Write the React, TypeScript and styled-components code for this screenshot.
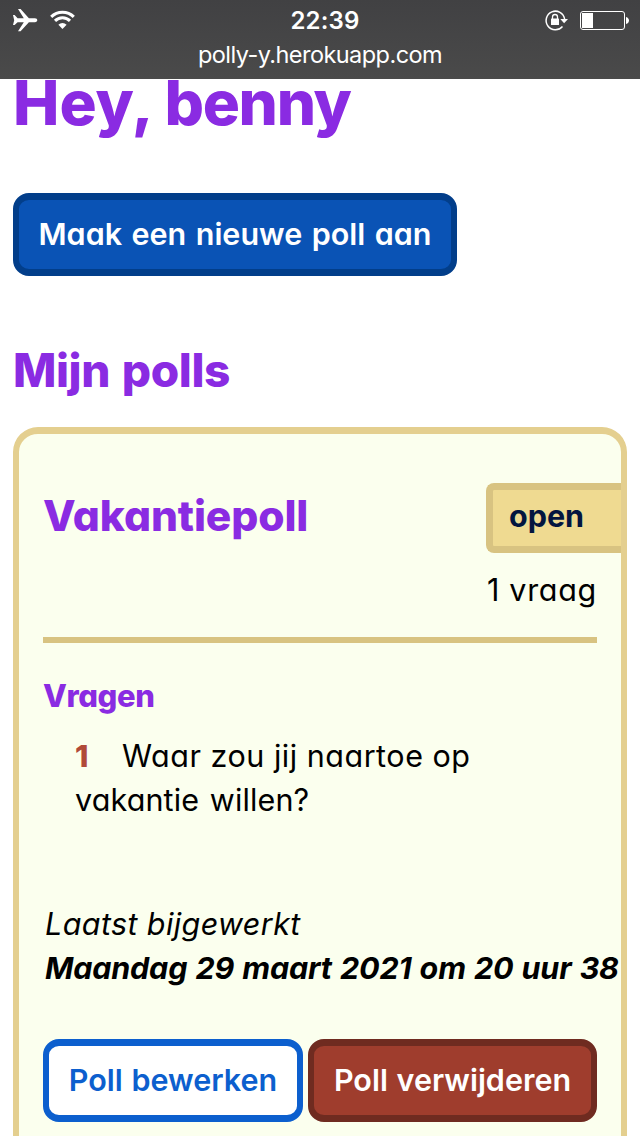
import React from "react";
import styled, { createGlobalStyle } from "styled-components";

const GlobalStyle = createGlobalStyle`
  * { box-sizing: border-box; }
  html, body { margin: 0; height: 1136px; overflow: hidden; background: #fff; }
  body { font-family: Inter, "Liberation Sans", sans-serif; font-size: 30.5px; line-height: 44px; color: #000; font-feature-settings: "cv11" 1; }
  h1, h2, h3, h4, p, ul { margin: 0; padding: 0; }
`;

const Screen = styled.div`
  width: 640px;
  height: 1136px;
  overflow: hidden;
`;

const StatusBar = styled.header`
  height: 79px;
  background: linear-gradient(#414143, #4a4a4a);
  color: #fff;
  font-feature-settings: normal;
`;

const StatusRow = styled.div`
  display: grid;
  grid-template-columns: 1fr auto 1fr;
  height: 41px;
  padding: 0 11px 0 12px;
`;

const Clock = styled.div`
  font-size: 24px;
  line-height: 41px;
  font-weight: 600;
  letter-spacing: 0.2px;
  padding-left: 9px;
`;

const StatusIcons = styled.div<{ $end?: boolean }>`
  display: flex;
  justify-content: ${(p) => (p.$end ? "flex-end" : "flex-start")};
`;

const Address = styled.div`
  text-align: center;
  font-size: 23.5px;
  line-height: 27px;
  letter-spacing: -0.55px;
`;

const Page = styled.main`
  padding: 0 13px;
`;

const Heading = styled.h1`
  color: #8a2be2;
  font-size: 62px;
  line-height: 47px;
  font-weight: 800;
  white-space: nowrap;
`;

const SectionHeading = styled.h2`
  margin: 69px 0 32px;
  color: #8a2be2;
  font-size: 46px;
  line-height: 50px;
  font-weight: 800;
  letter-spacing: -0.4px;
  word-spacing: 2px;
`;

const tones = {
  primary: { bg: "#0a53b5", border: "#023e8a", text: "#fff" },
  outline: { bg: "#fff", border: "#0c5fce", text: "#0c5fce" },
  danger: { bg: "#9f3d2d", border: "#6f2b20", text: "#fff" },
};

const Button = styled.button<{ $tone: keyof typeof tones; $width: number }>`
  display: block;
  width: ${(p) => p.$width}px;
  height: 83px;
  padding: 0 0 2px;
  border: solid ${(p) => tones[p.$tone].border};
  border-width: 7px 6px;
  border-radius: 16px;
  background: ${(p) => tones[p.$tone].bg};
  color: ${(p) => tones[p.$tone].text};
  font: 600 30.5px/44px Inter, "Liberation Sans", sans-serif;
  font-feature-settings: "cv11" 1;
  word-spacing: 1px;
  white-space: nowrap;
`;

const CreateButton = styled(Button)`
  margin-top: 67px;
  word-spacing: 1.8px;
`;

const Card = styled.article`
  height: 760px;
  padding: 49px 24px 0;
  border: solid #e4cf8f;
  border-width: 7px 6px;
  border-radius: 25px;
  background: #fbffee;
`;

const CardHeader = styled.div`
  display: flex;
  justify-content: space-between;
  height: 160px;
  border-bottom: 6px solid #d8c381;
`;

const CardTitle = styled.h3`
  margin-top: 8px;
  color: #8a2be2;
  font-size: 42.5px;
  line-height: 50px;
  font-weight: 800;
  letter-spacing: -0.12px;
`;

const CardMeta = styled.div`
  width: 111px;
  text-align: right;
  white-space: nowrap;
`;

const Badge = styled.div`
  width: 135px;
  height: 70px;
  margin-bottom: 15px;
  padding: 4px 0 0 16px;
  border: 7px solid #d8c381;
  border-right: 0;
  border-radius: 8px 0 0 8px;
  background: #efda91;
  color: #03153f;
  font-weight: 700;
  text-align: left;
`;

const Tracked = styled.span<{ $track: number; $words?: number }>`
  letter-spacing: ${(p) => p.$track}px;
  word-spacing: ${(p) => p.$words ?? 0}px;
`;

const QuestionsTitle = styled.h4`
  margin: 31px 0 16px;
  color: #8a2be2;
  font-size: 31px;
  line-height: 44px;
  font-weight: 800;
  letter-spacing: -0.4px;
`;

const Questions = styled.ul`
  padding-left: 32px;
  list-style: none;
`;

const Number = styled.b`
  display: inline-block;
  width: 47px;
  color: #b04a38;
  font-weight: 800;
`;

const Updated = styled.p`
  margin: 80px -24px 49px 0;
  padding-left: 2px;
  font-style: italic;
  white-space: nowrap;
`;

const Actions = styled.div`
  display: flex;
  gap: 5px;
`;

const Strong = styled.strong`
  font-weight: 700;
  letter-spacing: -0.2px;
  word-spacing: 1.2px;
`;

export default function App() {
  return (
    <Screen>
      <GlobalStyle />
      <StatusBar>
        <StatusRow>
          <StatusIcons>
            <svg width="70" height="41" viewBox="12 0 70 41" fill="#fff">
              <path d="M13 15h1.600l3 3.300h6.200L18 9h2.600l8.300 9.300h6c3.200 0 3.200 3.900 0 3.900h-6l-8.300 9H18l5.800-9h-6.200L14.600 25H13l1.200-4.800z" />
              <g fill="none" stroke="#fff" strokeWidth="3">
                <path d="M51.200 16.900a16 16 0 0 1 22.600 0" />
                <path d="M55 20.900a10.500 10.500 0 0 1 15 0" />
              </g>
              <path d="M58.400 24.700a5.900 5.900 0 0 1 8.200 0L62.500 29z" />
            </svg>
          </StatusIcons>
          <Clock>22:39</Clock>
          <StatusIcons $end>
            <svg width="86" height="41" viewBox="543 0 86 41" fill="none" stroke="#fff">
              <path d="M562.500 26.500A9.300 9.300 0 1 1 564.600 19" strokeWidth="1.500" />
              <path d="M560.300 19h7.700l-3.900 4.300z" fill="#fff" stroke="none" />
              <rect x="551" y="18.500" width="8" height="6.500" rx=".5" fill="#fff" stroke="none" />
              <path d="M552.500 19v-2a2.500 2.500 0 0 1 5 0v2" strokeWidth="1.300" />
              <rect x="580.500" y="11.500" width="44" height="18" rx="2.500" />
              <path d="M582 13h11v15h-11z" fill="#fff" stroke="none" />
              <path d="M626 17c4 1 4 6 0 7z" fill="#fff" stroke="none" />
            </svg>
          </StatusIcons>
        </StatusRow>
        <Address>polly-y.herokuapp.com</Address>
      </StatusBar>
      <Page>
        <Heading>
          Hey, <Tracked $track={-1.3}>benny</Tracked>
        </Heading>
        <CreateButton $tone="primary" $width={444}>Maak een nieuwe poll aan</CreateButton>
        <SectionHeading>Mijn polls</SectionHeading>
        <Card>
          <CardHeader>
            <CardTitle>Vakantiepoll</CardTitle>
            <CardMeta>
              <Badge>open</Badge>
              <Tracked $track={0.7}>1 vraag</Tracked>
            </CardMeta>
          </CardHeader>
          <QuestionsTitle>Vragen</QuestionsTitle>
          <Questions>
            <li>
              <Number>1</Number>
              <Tracked $track={0.52}>Waar zou jij naartoe op</Tracked>
              <br />
              <Tracked $track={0.13} $words={2}>vakantie willen?</Tracked>
            </li>
          </Questions>
          <Updated>
            <Tracked $track={0.4}>Laatst bijgewerkt</Tracked>
            <br />
            <Strong>Maandag 29 maart 2021 om 20 uur 38</Strong>
          </Updated>
          <Actions>
            <Button $tone="outline" $width={260}>Poll bewerken</Button>
            <Button $tone="danger" $width={289}>Poll verwijderen</Button>
          </Actions>
        </Card>
      </Page>
    </Screen>
  );
}
